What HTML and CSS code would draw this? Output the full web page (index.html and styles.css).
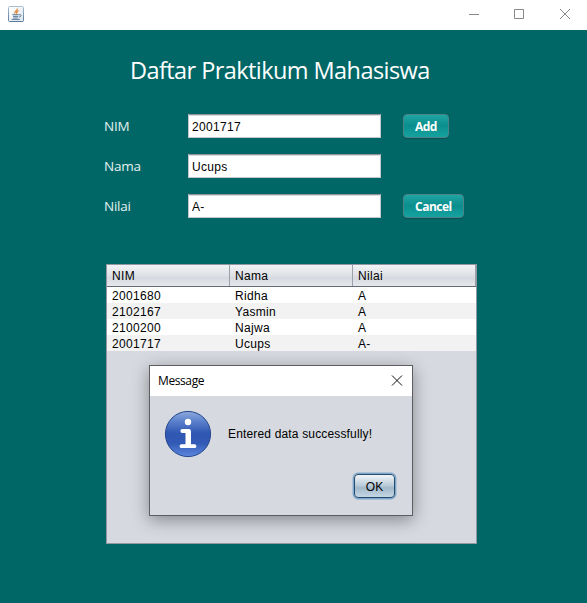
FILE: index.html
```html
<!DOCTYPE html>
<html lang="id">
<head>
<meta charset="utf-8">
<title>Daftar Praktikum Mahasiswa</title>
<link rel="stylesheet" href="styles.css">
</head>
<body>
<header class="titlebar">
  <svg class="java" width="16" height="16" viewBox="0 0 16 16">
    <defs><linearGradient id="jb" x1="0" y1="0" x2="0" y2="1"><stop offset="0" stop-color="#a9bfd3"/><stop offset="1" stop-color="#56799c"/></linearGradient>
    <linearGradient id="jf" x1="0" y1="0" x2="1" y2="1"><stop offset="0" stop-color="#fff"/><stop offset="1" stop-color="#dfe6ed"/></linearGradient></defs>
    <rect x=".5" y=".5" width="15" height="15" rx="1" fill="url(#jf)" stroke="url(#jb)"/>
    <path d="M9.3 2.5C9.8 4.5 6 4.9 6.8 7.6M10.5 4.6C8.2 5.4 8.2 6.2 8.7 7.7" fill="none" stroke="#e58a3c" stroke-width="1.3"/>
    <path d="M4.4 8.7H10.8M5 10.4H10.3M3.6 13.4H11.8M5.2 12H9.8M11 8.8C14 8 13.6 10.6 11 11.3" fill="none" stroke="#5c7c9b"/>
  </svg>
  <svg class="controls" width="102" height="12" viewBox="0 0 102 12">
    <path d="M0 6.5H10M45.5 1.5H54.5V10.5H45.5ZM91 1L101 11M101 1L91 11" fill="none" stroke="#888"/>
  </svg>
</header>
<main class="content">
  <h1>Daftar Praktikum Mahasiswa</h1>
  <form class="form">
    <label for="nim">NIM</label><input id="nim" value="2001717"><button type="button" class="action">Add</button>
    <label for="nama">Nama</label><input id="nama" value="Ucups"><span></span>
    <label for="nilai">Nilai</label><input id="nilai" value="A-"><button type="button" class="action">Cancel</button>
  </form>
  <section class="panel">
    <div class="row head"><span>NIM</span><span>Nama</span><span>Nilai</span></div>
    <div class="row"><span>2001680</span><span>Ridha</span><span>A</span></div>
    <div class="row"><span>2102167</span><span>Yasmin</span><span>A</span></div>
    <div class="row"><span>2100200</span><span>Najwa</span><span>A</span></div>
    <div class="row"><span>2001717</span><span>Ucups</span><span>A-</span></div>
    <div class="dialog">
      <div class="dialog-title"><span>Message</span>
        <svg width="12" height="12" viewBox="0 0 12 12"><path d="M1 .5L11 10.5M11 .5L1 10.5" stroke="#111"/></svg>
      </div>
      <div class="message">
        <svg width="48" height="48" viewBox="0 0 48 48">
          <defs><linearGradient id="ib" x1="0" y1="0" x2="0" y2="1"><stop offset="0" stop-color="#8ea9dc"/><stop offset=".22" stop-color="#5b80cb"/><stop offset=".48" stop-color="#3058b2"/><stop offset=".7" stop-color="#3159b5"/><stop offset="1" stop-color="#5c88de"/></linearGradient></defs>
          <circle cx="24" cy="24" r="22.6" fill="url(#ib)" stroke="#27488f"/>
          <circle cx="24" cy="12" r="3.2" fill="#fff"/>
          <path d="M18.3 21H25V36.2M17.5 36.2H30.5" fill="none" stroke="#fff" stroke-width="3.8" stroke-linecap="round" stroke-linejoin="round"/>
          <path d="M24.2 21V36" stroke="#fff" stroke-width="5.4"/>
        </svg>
        <span>Entered data successfully!</span>
      </div>
      <button type="button" class="ok">OK</button>
    </div>
  </section>
</main>
</body>
</html>
```
FILE: styles.css
```css
* { box-sizing: border-box; }
body {
  margin: 0;
  height: 603px;
  overflow: hidden;
  background: #006766;
  font: 12px/16px "Liberation Sans", Arial, sans-serif;
  color: #000;
}
.titlebar {
  height: 30px;
  background: #fff;
  display: flex;
  justify-content: space-between;
  padding: 6px 16px 0 8px;
}
.controls { margin-top: 2px; }
h1 {
  margin: 24px 0 0 130px;
  height: 34px;
  font: 400 23.5px/32px "Open Sans", sans-serif;
  letter-spacing: -0.57px;
  color: #fff;
  white-space: nowrap;
}
.form {
  margin: 26px 0 0 104px;
  display: grid;
  grid-template-columns: 84px 193px 60px;
  grid-auto-rows: 24px;
  row-gap: 16px;
}
.form label {
  font: 13.5px/24px "Open Sans", sans-serif;
  letter-spacing: -0.25px;
  color: #e2f1f0;
}
.form input {
  width: 193px;
  height: 24px;
  padding: 2px 3px 0;
  border: 1px solid #c3c7cc;
  border-top: 1px solid #8f9499;
  border-radius: 0;
  background: #fff;
  box-shadow: inset 0 1px #d9dcde;
  font: 12px "Liberation Sans", Arial, sans-serif;
  letter-spacing: .33px;
  color: #000;
}
.action {
  justify-self: start;
  margin-left: 22px;
  height: 24px;
  padding: 1px 11px 0;
  border: 1px solid #4d8387;
  border-radius: 4px;
  background: linear-gradient(#20a5a3, #0b8e8d 48%, #14a3a0);
  box-shadow: 0 1px #075353;
  font: bold 12px "Open Sans", sans-serif;
  letter-spacing: -0.5px;
  color: #fff;
}
.panel {
  position: relative;
  margin: 46px 0 0 106px;
  width: 371px;
  height: 280px;
  border: 1px solid #9297a1;
  background: #d6d9df;
}
.row {
  display: grid;
  grid-template-columns: repeat(3, 123px);
  height: 16px;
  line-height: 19px;
  letter-spacing: .33px;
  background: #fff;
}
.row:nth-child(odd) { background: #f2f2f2; }
.row span { padding-left: 5px; }
.row.head {
  height: 22px;
  border-bottom: 1px solid #626a78;
  background: linear-gradient(#f2f3f5, #dfe1e6 50%, #d6d9df 60%, #e6e8ec);
  line-height: 23px;
}
.head span { height: 21px; border-right: 1px solid #9ba0aa; }
.dialog {
  position: absolute;
  left: 42px;
  top: 100px;
  width: 264px;
  height: 151px;
  border: 1px solid #5c5e62;
  background: #d6d9df;
  box-shadow: 0 4px 16px rgba(0, 0, 0, .38);
}
.dialog-title {
  height: 30px;
  background: #fff;
  display: flex;
  align-items: center;
  justify-content: space-between;
  padding: 0 9px 0 8px;
  font-family: "Open Sans", sans-serif;
  font-size: 12px;
  letter-spacing: -0.4px;
}
.message {
  display: flex;
  align-items: center;
  gap: 16px;
  margin: 14px 0 0 14px;
  letter-spacing: .16px;
}
.ok {
  display: block;
  margin: 16px 0 0 204px;
  width: 41px;
  height: 24px;
  padding: 1px 0 0;
  border: 1px solid #284b6b;
  border-radius: 4px;
  background: linear-gradient(#f1f5f8, #b9cbd9 48%, #a2b8c9 58%, #c4d7e6);
  box-shadow: 0 0 0 1.4px #7da7cd;
  font: 12px "Liberation Sans", Arial, sans-serif;
}
```
